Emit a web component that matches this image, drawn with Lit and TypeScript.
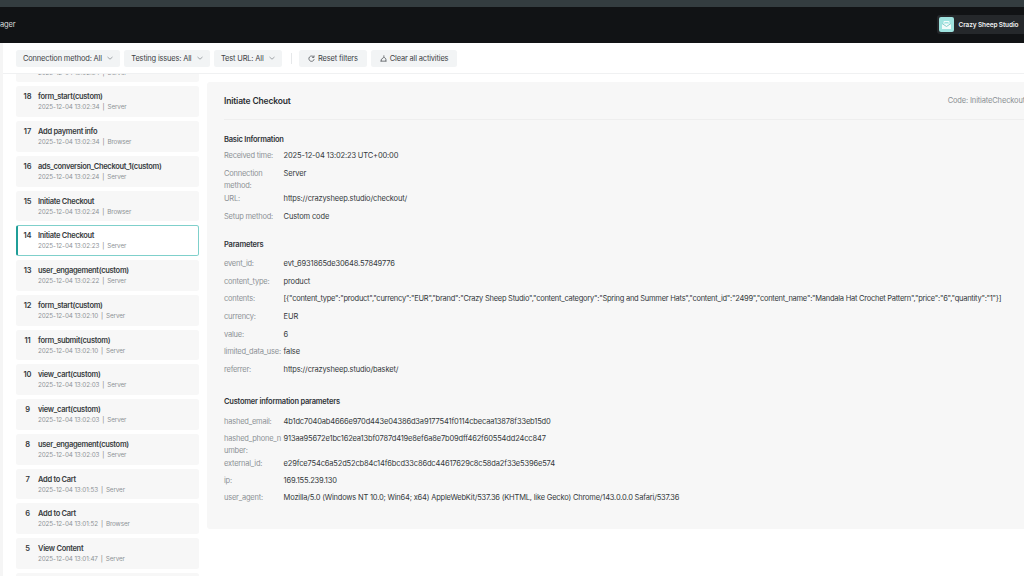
import { LitElement, html, css } from "lit";
import { customElement } from "lit/decorators.js";

const items: [number, string, string, string][] = [
  [19, "form_submit(custom)", "2025-12-04 13:02:34", "Server"],
  [18, "form_start(custom)", "2025-12-04 13:02:34", "Server"],
  [17, "Add payment info", "2025-12-04 13:02:34", "Browser"],
  [16, "ads_conversion_Checkout_1(custom)", "2025-12-04 13:02:24", "Server"],
  [15, "Initiate Checkout", "2025-12-04 13:02:24", "Browser"],
  [14, "Initiate Checkout", "2025-12-04 13:02:23", "Server"],
  [13, "user_engagement(custom)", "2025-12-04 13:02:22", "Server"],
  [12, "form_start(custom)", "2025-12-04 13:02:10", "Server"],
  [11, "form_submit(custom)", "2025-12-04 13:02:10", "Server"],
  [10, "view_cart(custom)", "2025-12-04 13:02:03", "Server"],
  [9, "view_cart(custom)", "2025-12-04 13:02:03", "Server"],
  [8, "user_engagement(custom)", "2025-12-04 13:02:03", "Server"],
  [7, "Add to Cart", "2025-12-04 13:01:53", "Server"],
  [6, "Add to Cart", "2025-12-04 13:01:52", "Browser"],
  [5, "View Content", "2025-12-04 13:01:47", "Server"],
  [4, "Page View", "2025-12-04 13:01:47", "Browser"],
];

const chevron = html`<svg class="chev" viewBox="0 0 8 8"><path d="M1.500 3l2.500 2.200L6.500 3" fill="none" stroke="#8b9094" stroke-width=".8"/></svg>`;

@customElement("app-root")
export class AppRoot extends LitElement {
  static styles = css`
    :host { display: block; width: 1024px; height: 576px; overflow: hidden; background: #fff; font-family: Inter, "Liberation Sans", sans-serif; color: #2c2f33; }
    .strip { height: 7px; background: #343d40; }
    .top { height: 36px; background: #111315; display: flex; align-items: center; justify-content: space-between; color: #d8dadc; font-size: 7.500px; letter-spacing: -0.150px; }
    .brand { margin-top: -2px; }
    .acct { display: flex; align-items: center; gap: 4.500px; height: 19px; padding-left: 2px; width: 87px; box-sizing: border-box; background: #25282b; border-radius: 3px 0 0 3px; color: #eef0f1; font-size: 6.500px; font-weight: 600; letter-spacing: -0.120px; white-space: nowrap; margin-top: -1px; }
    .logo { width: 15px; height: 15px; flex: none; }
    .body { display: flex; height: 533px; }
    .rail { width: 3px; background: #f5f5f5; flex: none; }
    .main { flex: 1; min-width: 0; display: flex; flex-direction: column; }
    .filters { height: 31px; flex: none; box-sizing: border-box; border-bottom: 1px solid #f0f1f2; display: flex; align-items: center; gap: 4px; padding: 0 0 0 13px; background: #fff; font-size: 7.500px; letter-spacing: -0.180px; color: #3d4246; }
    .btn { height: 17px; display: flex; align-items: center; gap: 3px; background: #f2f4f5; border-radius: 2.500px; padding: 0 9px; white-space: nowrap; box-sizing: border-box; }
    .btn.sel { padding: 0 6.500px 0 7px; gap: 4px; }
    .chev { width: 8px; height: 8px; }
    .sep { width: 1px; height: 11px; background: #e6e8ea; margin: 0 3px 0 5px; }
    .icon { width: 7px; height: 7px; flex: none; }
    .content { flex: 1; min-height: 0; display: flex; gap: 8px; padding-left: 13px; overflow: hidden; }
    .list { width: 183px; flex: none; overflow: hidden; }
    .inner { display: flex; flex-direction: column; gap: 4px; margin-top: -22.500px; }
    .item { height: 30.750px; box-sizing: border-box; flex: none; background: #f7f7f7; border-radius: 2.500px; display: flex; gap: 6px; padding: 5px 7px 0; }
    .item.sel { background: #fff; border: 1px solid #7fd0cb; border-left: 2px solid #1f9e98; padding: 4px 6px 0 5px; }
    .num { width: 9px; text-align: center; flex: none; font-size: 7.500px; font-weight: 600; line-height: 11px; color: #33373b; letter-spacing: -0.100px; }
    .name { font-size: 7.500px; font-weight: 600; line-height: 11px; color: #383c40; white-space: nowrap; letter-spacing: -0.300px; }
    .meta { font-size: 6.300px; line-height: 10px; color: #8d9296; white-space: nowrap; letter-spacing: -0.100px; }
    .meta i { font-style: normal; margin: 0 3px; color: #777; }
    .panel { width: 850px; flex: none; margin-top: 8px; height: 447px; background: #f7f7f7; border-radius: 3px; box-sizing: border-box; padding: 0 17px; }
    .head { height: 38px; border-bottom: 1px solid #eeeeee; display: flex; align-items: center; justify-content: space-between; box-sizing: border-box; }
    .head b { font-size: 8.500px; font-weight: 600; color: #2c2f33; letter-spacing: -0.170px; }
    .head span { font-size: 7.500px; letter-spacing: -0.150px; color: #8a8f93; white-space: nowrap; margin-right: 15px; }
    h4 { margin: 0; font-size: 7.500px; font-weight: 600; line-height: 11px; color: #2f3337; letter-spacing: -0.220px; }
    .sec { margin-top: 13.500px; }
    .sec.b { margin-top: 15.500px; }
    .sec.c { margin-top: 20.500px; }
    .sec.b h4, .sec.c h4 { padding-bottom: 3px; }
    .row { display: flex; margin-top: 5.600px; font-size: 7.500px; line-height: 12px; letter-spacing: -0.150px; }
    .sec.c .row { margin-top: 5.300px; }
    .sec.c .row.tight { margin-top: 1px; }
    .k { width: 58px; margin-right: 1.600px; flex: none; color: #8d9296; overflow-wrap: anywhere; letter-spacing: -0.220px; }
    .v { color: #33373b; white-space: nowrap; }
    .v.json { letter-spacing: -0.250px; }
    .v.agent { letter-spacing: -0.190px; }
    .tight { margin-top: 1.800px; }
  `;

  row(k: string, v: string, tight = false, cls = "") {
    return html`<div class="row ${tight ? "tight" : ""}"><div class="k">${k}</div><div class="v ${cls}">${v}</div></div>`;
  }

  render() {
    return html`
      <div class="strip"></div>
      <div class="top">
        <span class="brand">ager</span>
        <div class="acct">
          <svg class="logo" viewBox="0 0 15 15"><rect width="15" height="15" rx="2" fill="#9fe3df"/><path d="M3 6.500h9v5.500H3z" fill="#f2fbfa"/><path d="M3 6.500l4.500 3 4.500-3" fill="none" stroke="#6cc4bf" stroke-width=".8"/><path d="M5 6V4.500h5V6" fill="none" stroke="#f2fbfa" stroke-width="1"/></svg>
          <span>Crazy Sheep Studio</span>
        </div>
      </div>
      <div class="body">
        <div class="rail"></div>
        <div class="main">
          <div class="filters">
            <div class="btn sel">Connection method: All ${chevron}</div>
            <div class="btn sel">Testing issues: All ${chevron}</div>
            <div class="btn sel">Test URL: All ${chevron}</div>
            <div class="sep"></div>
            <div class="btn">
              <svg class="icon" viewBox="0 0 10 10"><path d="M8 2.800A3.800 3.800 0 1 0 8.800 6" fill="none" stroke="#3d4246" stroke-width="1"/><path d="M8.600 .6v2.800H5.800" fill="none" stroke="#3d4246" stroke-width="1"/></svg>
              Reset filters
            </div>
            <div class="btn">
              <svg class="icon" viewBox="0 0 10 10"><path d="M.5 8.800h9M2 8.800C1 6.500 2.500 5 3.800 5 4 3 6.500 2.500 7 4.500 8.500 4.500 9 7 8 8.800M4.500 1.500h2" fill="none" stroke="#3d4246" stroke-width="1"/></svg>
              Clear all activities
            </div>
          </div>
          <div class="content">
            <div class="list"><div class="inner">
              ${items.map(([n, t, d, s]) => html`
                <div class="item ${n === 14 ? "sel" : ""}">
                  <div class="num">${n}</div>
                  <div>
                    <div class="name">${t}</div>
                    <div class="meta">${d}<i>|</i>${s}</div>
                  </div>
                </div>`)}
            </div></div>
            <div class="panel">
              <div class="head"><b>Initiate Checkout</b><span>Code: InitiateCheckout</span></div>
              <div class="sec">
                <h4>Basic Information</h4>
                ${this.row("Received time:", "2025-12-04 13:02:23 UTC+00:00")}
                ${this.row("Connection method:", "Server")}
                ${this.row("URL:", "https://crazysheep.studio/checkout/", true)}
                ${this.row("Setup method:", "Custom code")}
              </div>
              <div class="sec b">
                <h4>Parameters</h4>
                ${this.row("event_id:", "evt_6931865de30648.57849776")}
                ${this.row("content_type:", "product")}
                ${this.row("contents:", '[{"content_type":"product","currency":"EUR","brand":"Crazy Sheep Studio","content_category":"Spring and Summer Hats","content_id":"2499","content_name":"Mandala Hat Crochet Pattern","price":"6","quantity":"1"}]', false, "json")}
                ${this.row("currency:", "EUR")}
                ${this.row("value:", "6")}
                ${this.row("limited_data_use:", "false")}
                ${this.row("referrer:", "https://crazysheep.studio/basket/")}
              </div>
              <div class="sec c">
                <h4>Customer information parameters</h4>
                ${this.row("hashed_email:", "4b1dc7040ab4666e970d443e04386d3a9177541f0114cbecaa13878f33eb15d0")}
                ${this.row("hashed_phone_number:", "913aa95672e1bc162ea13bf0787d419e8ef6a8e7b09dff462f60554dd24cc847")}
                ${this.row("external_id:", "e29fce754c6a52d52cb84c14f6bcd33c86dc44617629c8c58da2f33e5396e574", true)}
                ${this.row("ip:", "169.155.239.130")}
                ${this.row("user_agent:", "Mozilla/5.0 (Windows NT 10.0; Win64; x64) AppleWebKit/537.36 (KHTML, like Gecko) Chrome/143.0.0.0 Safari/537.36", false, "agent")}
              </div>
            </div>
          </div>
        </div>
      </div>
    `;
  }
}
